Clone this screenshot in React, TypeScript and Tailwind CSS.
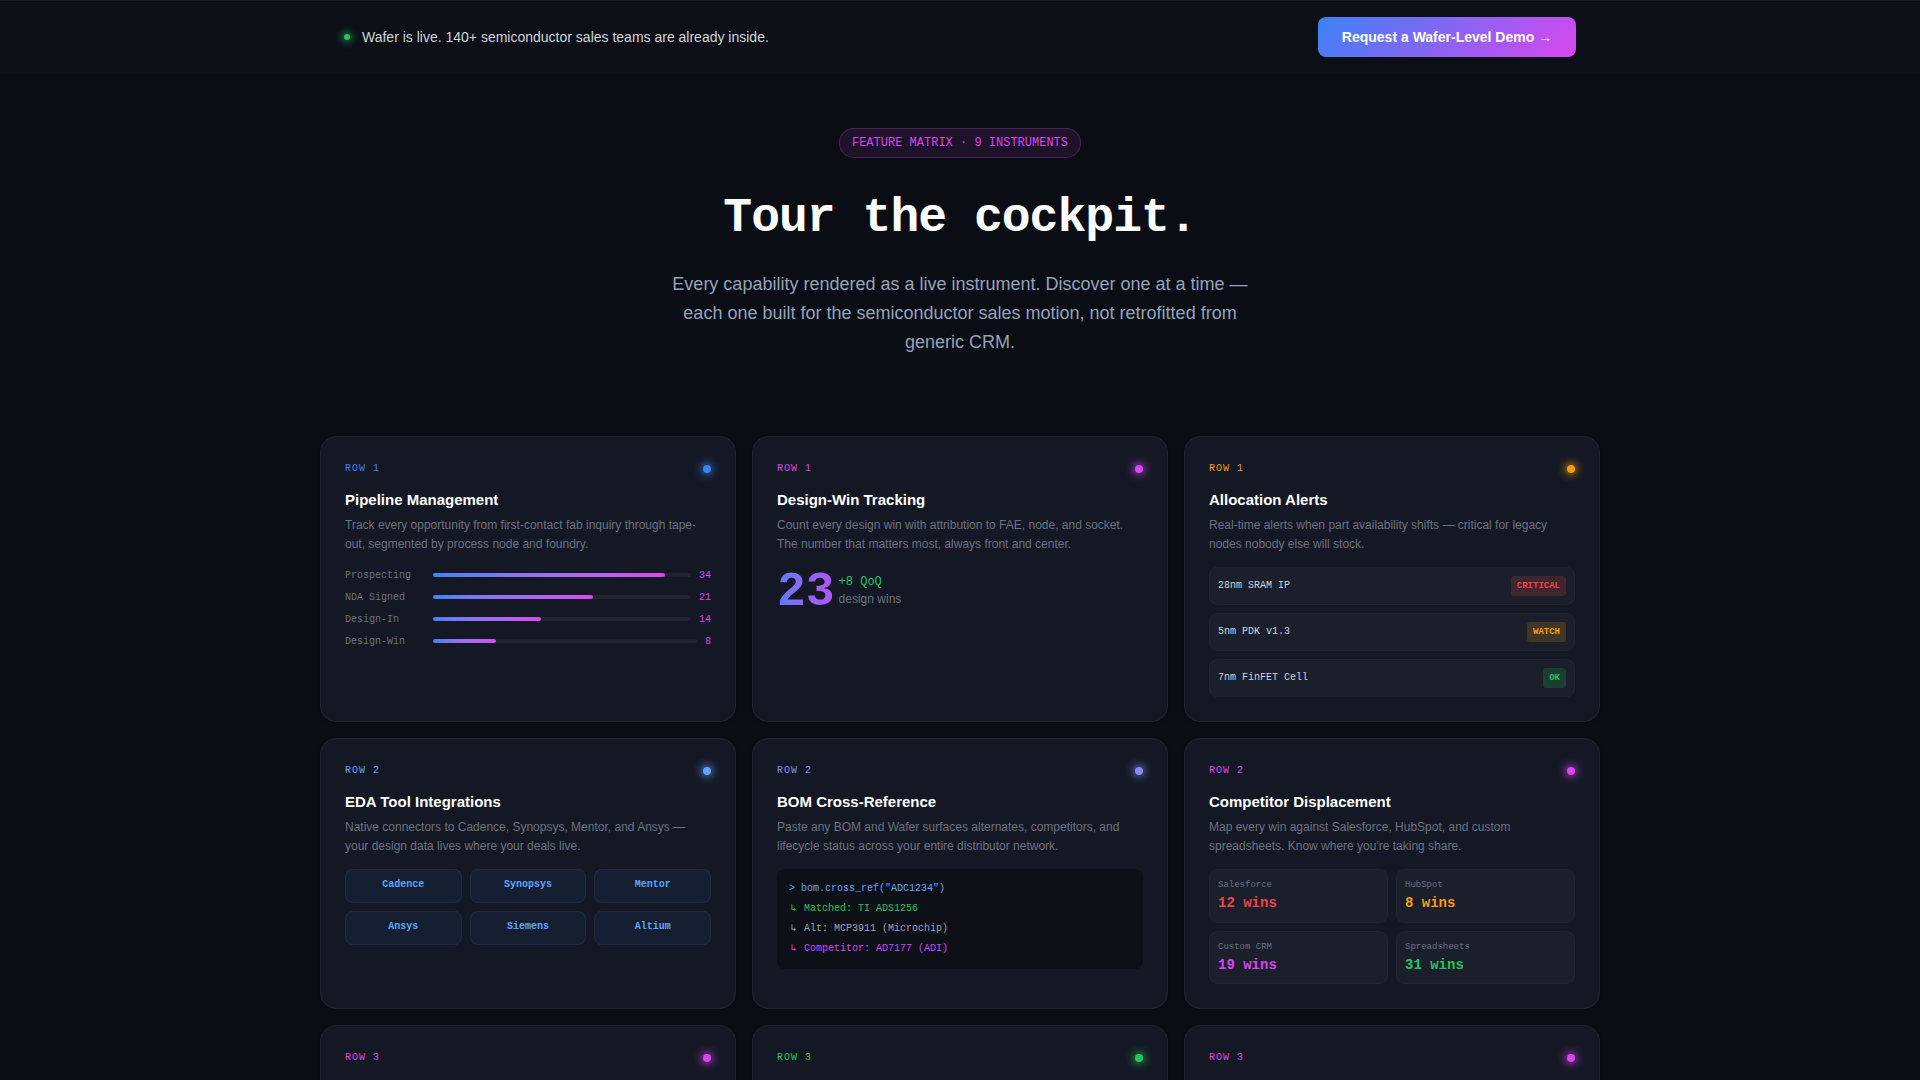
import React from "react";

const mono = "font-['Liberation_Mono',monospace]";

function Card({ label, labelColor, dotClass, title, desc, children }: { label: string; labelColor: string; dotClass: string; title?: string; desc?: string; children?: React.ReactNode }) {
  return (
    <div className="rounded-2xl border border-[#1f2430] bg-[#141824] p-6 shadow-[0_1px_3px_rgba(0,0,0,0.3)]">
      <div className="flex items-start justify-between">
        <span className={`${mono} text-[10px] leading-4 tracking-[1px] ${labelColor}`}>{label}</span>
        <span className={`mt-1 h-2 w-2 rounded-full ${dotClass}`} />
      </div>
      {title && <h3 className="mt-[13px] text-[15px] font-bold leading-5 text-white">{title}</h3>}
      {desc && <p className="mb-[13.1px] mt-[5.5px] text-xs leading-[19.2px] text-[#6b7280]">{desc}</p>}
      {children}
    </div>
  );
}

const bars = [
  { name: "Prospecting", v: 34, w: 90 },
  { name: "NDA Signed", v: 21, w: 62 },
  { name: "Design-In", v: 14, w: 42 },
  { name: "Design-Win", v: 8, w: 24 },
];

function Pipeline() {
  return (
    <div className="flex flex-col gap-[6px]">
      {bars.map((b) => (
        <div key={b.name} className={`${mono} flex h-4 items-center gap-2 text-[10px]`}>
          <span className="w-20 text-[#6b7280]">{b.name}</span>
          <div className="h-1 flex-1 rounded-full bg-[#1f2430]">
            <div className="h-full rounded-full bg-linear-to-r from-[#3b82f6] to-[#d946ef]" style={{ width: `${b.w}%` }} />
          </div>
          <span className="text-[#d946ef]">{b.v}</span>
        </div>
      ))}
    </div>
  );
}

function Wins() {
  return (
    <div className="flex items-center gap-1">
      <span className={`${mono} bg-linear-to-r from-[#5a7af7] to-[#b450f3] bg-clip-text text-5xl font-bold leading-[50px] text-transparent`}>23</span>
      <div className="-mt-[3px]">
        <div className={`${mono} text-xs leading-[17px] text-[#22c55e]`}>+8 QoQ</div>
        <div className="text-xs leading-[17px] text-[#6b7280]">design wins</div>
      </div>
    </div>
  );
}

const alerts = [
  { name: "28nm SRAM IP", tag: "CRITICAL", cls: "text-[#ef4444] bg-[#ef4444]/18" },
  { name: "5nm PDK v1.3", tag: "WATCH", cls: "text-[#f59e0b] bg-[#f59e0b]/18" },
  { name: "7nm FinFET Cell", tag: "OK", cls: "text-[#22c55e] bg-[#22c55e]/18" },
];

function Alerts() {
  return (
    <div className="flex flex-col gap-2">
      {alerts.map((a) => (
        <div key={a.name} className={`${mono} flex h-[38px] items-center justify-between rounded-lg border border-[#1f2430] bg-[#1a1f2b] pl-2 pr-2`}>
          <span className="-mt-px text-[10px] text-[#d1d5db]">{a.name}</span>
          <span className={`rounded-[3px] px-[6px] pb-[2px] pt-[2px] text-[9px] font-bold leading-[16px] ${a.cls}`}>{a.tag}</span>
        </div>
      ))}
    </div>
  );
}

function Eda() {
  return (
    <div className="grid grid-cols-3 gap-2">
      {["Cadence", "Synopsys", "Mentor", "Ansys", "Siemens", "Altium"].map((n) => (
        <div key={n} className={`${mono} h-[34px] rounded-lg border border-[#3b82f6]/12 bg-[#3b82f6]/7 pt-[7px] text-center text-[10px] font-bold leading-4 text-[#60a5fa]`}>{n}</div>
      ))}
    </div>
  );
}

function Arrow() {
  return <span className="inline-block w-[9px] text-center">↳</span>;
}

function Bom() {
  return (
    <div className={`${mono} mt-px h-[100px] rounded-lg bg-[#0d1017] px-3 pt-[10px] text-[10px] leading-5`}>
      <div className="text-[#60a5fa]">&gt; bom.cross_ref("ADC1234")</div>
      <div className="text-[#22c55e]"><Arrow /> Matched: TI ADS1256</div>
      <div className="text-[#9ca3af]"><Arrow /> Alt: MCP3911 (Microchip)</div>
      <div className="text-[#d946ef]"><Arrow /> Competitor: AD7177 (ADI)</div>
    </div>
  );
}

const comps = [
  { n: "Salesforce", v: "12 wins", c: "text-[#ef4444]" },
  { n: "HubSpot", v: "8 wins", c: "text-[#f59e0b]" },
  { n: "Custom CRM", v: "19 wins", c: "text-[#d946ef]" },
  { n: "Spreadsheets", v: "31 wins", c: "text-[#22c55e]" },
];

function Comp() {
  return (
    <div className="grid grid-cols-2 gap-2">
      {comps.map((c) => (
        <div key={c.n} className={`${mono} h-[53.5px] rounded-lg border border-[#1f2430] bg-[#1a1f2b] px-2 pt-[8px]`}>
          <div className="text-[9px] leading-[14px] text-[#6b7280]">{c.n}</div>
          <div className={`mt-[1px] text-sm font-bold leading-[20px] ${c.c}`}>{c.v}</div>
        </div>
      ))}
    </div>
  );
}

export default function App() {
  return (
    <div className="h-screen overflow-hidden bg-[#0a0d14] font-['Liberation_Sans',Arial,sans-serif]">
      <div className="border-t border-[#1a1e28] bg-[#0c0f16]">
        <div className="mx-auto flex h-[72px] w-[1280px] items-center justify-between px-6">
          <div className="flex items-center gap-[12px]">
            <span className="h-[6px] w-[6px] rounded-full bg-[#22c55e] shadow-[0_0_8px_1px_#22c55e]" />
            <span className="text-sm text-[#d1d5db]">Wafer is live. 140+ semiconductor sales teams are already inside.</span>
          </div>
          <button className="h-10 w-[258px] rounded-lg bg-[linear-gradient(135deg,#3b82f6,#d946ef)] text-sm font-bold text-white">Request a Wafer-Level Demo →</button>
        </div>
      </div>

      <section className="flex flex-col items-center pt-[55px] text-center">
        <span className={`${mono} h-[30px] rounded-full border border-[#d946ef]/25 bg-[#d946ef]/10 px-3 text-xs leading-7 text-[#d946ef]`}>FEATURE MATRIX · 9 INSTRUMENTS</span>
        <h1 className={`${mono} mt-[34px] text-[48px] font-bold leading-[53px] tracking-[-0.96px] text-white`}>Tour the cockpit.</h1>
        <p className="mt-[25px] w-[580px] text-lg leading-[29px] text-[#94a3b8]">Every capability rendered as a live instrument. Discover one at a time — each one built for the semiconductor sales motion, not retrofitted from generic CRM.</p>
      </section>

      <div className="mx-auto mt-[79px] grid w-[1280px] grid-cols-3 gap-4">
        <Card label="ROW 1" labelColor="text-[#3b82f6]" dotClass="bg-[#3b82f6] shadow-[0_0_10px_1px_#3b82f6]" title="Pipeline Management" desc="Track every opportunity from first-contact fab inquiry through tape-out, segmented by process node and foundry."><Pipeline /></Card>
        <Card label="ROW 1" labelColor="text-[#d946ef]" dotClass="bg-[#d946ef] shadow-[0_0_10px_1px_#d946ef]" title="Design-Win Tracking" desc="Count every design win with attribution to FAE, node, and socket. The number that matters most, always front and center."><Wins /></Card>
        <Card label="ROW 1" labelColor="text-[#f59e0b]" dotClass="bg-[#f59e0b] shadow-[0_0_10px_1px_#f59e0b]" title="Allocation Alerts" desc="Real-time alerts when part availability shifts — critical for legacy nodes nobody else will stock."><Alerts /></Card>
        <Card label="ROW 2" labelColor="text-[#60a5fa]" dotClass="bg-[#60a5fa] shadow-[0_0_10px_1px_#60a5fa]" title="EDA Tool Integrations" desc="Native connectors to Cadence, Synopsys, Mentor, and Ansys — your design data lives where your deals live."><Eda /></Card>
        <Card label="ROW 2" labelColor="text-[#818cf8]" dotClass="bg-[#818cf8] shadow-[0_0_10px_1px_#818cf8]" title="BOM Cross-Reference" desc="Paste any BOM and Wafer surfaces alternates, competitors, and lifecycle status across your entire distributor network."><Bom /></Card>
        <Card label="ROW 2" labelColor="text-[#d946ef]" dotClass="bg-[#d946ef] shadow-[0_0_10px_1px_#d946ef]" title="Competitor Displacement" desc="Map every win against Salesforce, HubSpot, and custom spreadsheets. Know where you're taking share."><Comp /></Card>
        <Card label="ROW 3" labelColor="text-[#d946ef]" dotClass="bg-[#d946ef] shadow-[0_0_10px_1px_#d946ef]"><div className="h-40" /></Card>
        <Card label="ROW 3" labelColor="text-[#22c55e]" dotClass="bg-[#22c55e] shadow-[0_0_10px_1px_#22c55e]"><div className="h-40" /></Card>
        <Card label="ROW 3" labelColor="text-[#d946ef]" dotClass="bg-[#d946ef] shadow-[0_0_10px_1px_#d946ef]"><div className="h-40" /></Card>
      </div>
    </div>
  );
}
